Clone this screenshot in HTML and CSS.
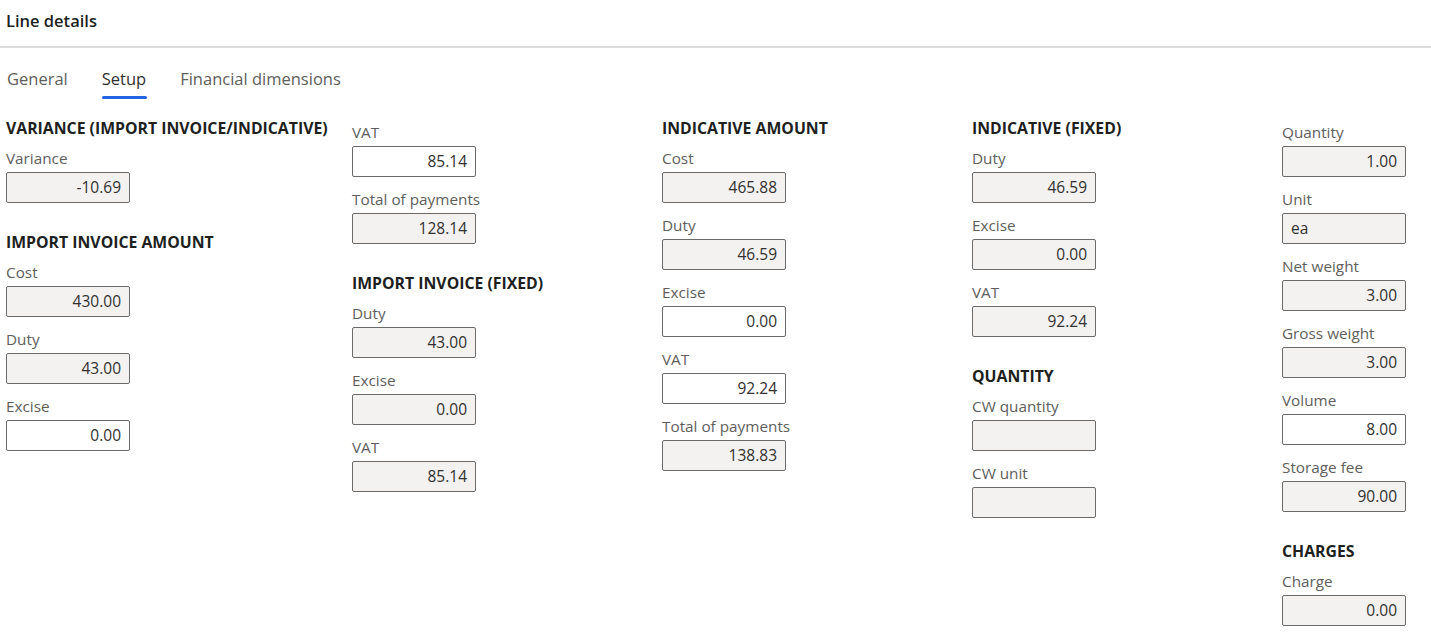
FILE: index.html
```html
<!DOCTYPE html>
<html lang="en">
<head>
<meta charset="utf-8">
<title>Line details</title>
<link rel="stylesheet" href="styles.css">
</head>
<body>
<div class="page">
  <header class="title-bar"><h1 class="title">Line details</h1></header>
  <nav class="tabs">
    <span class="tab">General</span>
    <span class="tab active">Setup</span>
    <span class="tab">Financial dimensions</span>
  </nav>
  <main class="columns">
    <section class="col col-first">
      <h2 class="group-title first">VARIANCE (IMPORT INVOICE/INDICATIVE)</h2>
      <div class="field"><label class="label">Variance</label><div class="input ro">-10.69</div></div>
      <h2 class="group-title">IMPORT INVOICE AMOUNT</h2>
      <div class="field"><label class="label">Cost</label><div class="input ro">430.00</div></div>
      <div class="field"><label class="label">Duty</label><div class="input ro">43.00</div></div>
      <div class="field"><label class="label">Excise</label><div class="input">0.00</div></div>
    </section>
    <section class="col cont">
      <div class="field"><label class="label">VAT</label><div class="input">85.14</div></div>
      <div class="field"><label class="label">Total of payments</label><div class="input ro">128.14</div></div>
      <h2 class="group-title">IMPORT INVOICE (FIXED)</h2>
      <div class="field"><label class="label">Duty</label><div class="input ro">43.00</div></div>
      <div class="field"><label class="label">Excise</label><div class="input ro">0.00</div></div>
      <div class="field"><label class="label">VAT</label><div class="input ro">85.14</div></div>
    </section>
    <section class="col">
      <h2 class="group-title first">INDICATIVE AMOUNT</h2>
      <div class="field"><label class="label">Cost</label><div class="input ro">465.88</div></div>
      <div class="field"><label class="label">Duty</label><div class="input ro">46.59</div></div>
      <div class="field"><label class="label">Excise</label><div class="input">0.00</div></div>
      <div class="field"><label class="label">VAT</label><div class="input">92.24</div></div>
      <div class="field"><label class="label">Total of payments</label><div class="input ro">138.83</div></div>
    </section>
    <section class="col">
      <h2 class="group-title first">INDICATIVE (FIXED)</h2>
      <div class="field"><label class="label">Duty</label><div class="input ro">46.59</div></div>
      <div class="field"><label class="label">Excise</label><div class="input ro">0.00</div></div>
      <div class="field"><label class="label">VAT</label><div class="input ro">92.24</div></div>
      <h2 class="group-title">QUANTITY</h2>
      <div class="field"><label class="label">CW quantity</label><div class="input ro"></div></div>
      <div class="field"><label class="label">CW unit</label><div class="input ro"></div></div>
    </section>
    <section class="col cont last">
      <div class="field"><label class="label">Quantity</label><div class="input ro">1.00</div></div>
      <div class="field"><label class="label">Unit</label><div class="input ro text">ea</div></div>
      <div class="field"><label class="label">Net weight</label><div class="input ro">3.00</div></div>
      <div class="field"><label class="label">Gross weight</label><div class="input ro">3.00</div></div>
      <div class="field"><label class="label">Volume</label><div class="input">8.00</div></div>
      <div class="field"><label class="label">Storage fee</label><div class="input ro">90.00</div></div>
      <h2 class="group-title">CHARGES</h2>
      <div class="field"><label class="label">Charge</label><div class="input ro">0.00</div></div>
    </section>
  </main>
</div>
</body>
</html>
```

FILE: styles.css
```css
html, body {
  margin: 0;
  padding: 0;
  background: #ffffff;
}
body {
  font-family: "Open Sans", "Noto Sans", "Liberation Sans", sans-serif;
  color: #323130;
  overflow: hidden;
}
.page {
  width: 1431px;
  height: 633px;
}
.title-bar {
  height: 48px;
  border-bottom: 2px solid #dcdcdc;
  display: flex;
  align-items: center;
  padding-left: 6px;
  box-sizing: border-box;
}
.title {
  margin: 0;
  font-size: 16.5px;
  font-weight: 600;
  color: #201f1e;
  line-height: 20px;
  padding-bottom: 4px;
}
.tabs {
  display: flex;
  gap: 34px;
  padding-left: 7px;
  margin-top: 19px;
  height: 32px;
}
.tab {
  font-size: 16.5px;
  line-height: 24px;
  color: #605e5c;
  position: relative;
  height: 32px;
}
.tab.active {
  color: #323130;
}
.tab.active::after {
  content: "";
  position: absolute;
  left: 0;
  right: -1px;
  bottom: 0;
  height: 3px;
  border-radius: 2px;
  background: #2266e3;
}
.columns {
  display: flex;
  padding-left: 6px;
  margin-top: 19px;
}
.col {
  width: 310px;
  display: flex;
  flex-direction: column;
  align-items: flex-start;
}
.col-first {
  width: 346px;
}
.col.cont {
  padding-top: 4px;
}
.col.last {
  width: 140px;
}
.group-title {
  margin: 17px 0 10px;
  font-size: 15.8px;
  font-weight: 700;
  line-height: 20px;
  color: #201f1e;
  white-space: nowrap;
}
.group-title.first {
  margin-top: 0;
}
.field {
  display: flex;
  flex-direction: column;
  margin-bottom: 12px;
}
.label {
  font-size: 15.3px;
  line-height: 20px;
  color: #605e5c;
  margin-bottom: 4px;
  white-space: nowrap;
}
.input {
  width: 124px;
  height: 31px;
  box-sizing: border-box;
  border: 1px solid #6b6a69;
  border-radius: 2px;
  background: #ffffff;
  font-size: 15.5px;
  line-height: 29px;
  text-align: right;
  padding: 0 8px;
  color: #323130;
}
.input.ro {
  background: #f3f2f1;
}
.input.text {
  text-align: left;
}
```
